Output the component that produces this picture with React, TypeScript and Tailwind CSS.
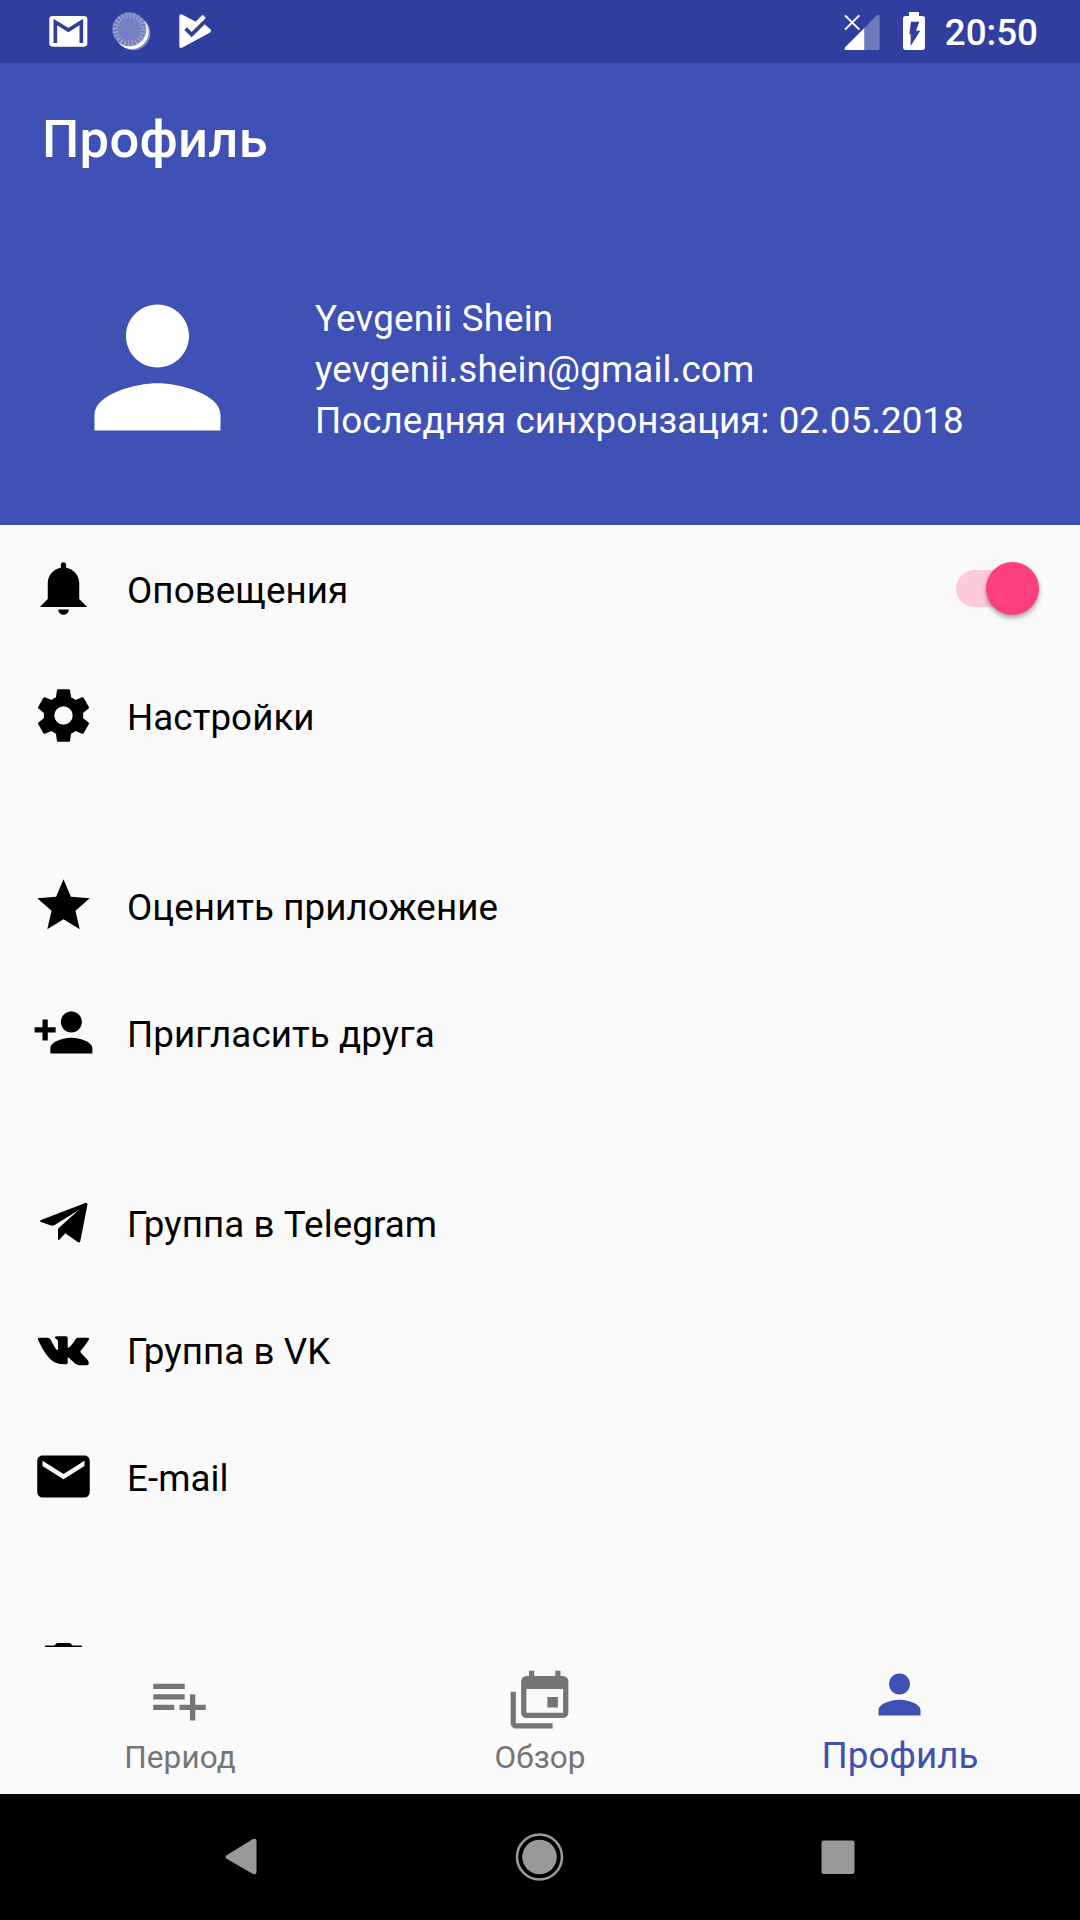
import type { ReactNode } from "react";
import { useState } from "react";

const paths = {
  bell: "M14,20A2,2 0 0,1 12,22A2,2 0 0,1 10,20H14M12,2A1,1 0 0,1 13,3V4.08C15.84,4.56 18,7.03 18,10V16L21,19H3L6,16V10C6,7.03 8.16,4.56 11,4.08V3A1,1 0 0,1 12,2Z",
  cog: "M12,15.5A3.5,3.5 0 0,1 8.5,12A3.5,3.5 0 0,1 12,8.5A3.5,3.5 0 0,1 15.5,12A3.5,3.5 0 0,1 12,15.5M19.43,12.97C19.47,12.65 19.5,12.33 19.5,12C19.5,11.67 19.47,11.34 19.43,11L21.54,9.37C21.73,9.22 21.78,8.95 21.66,8.73L19.66,5.27C19.54,5.05 19.27,4.96 19.05,5.05L16.56,6.05C16.04,5.66 15.5,5.32 14.87,5.07L14.5,2.42C14.46,2.18 14.25,2 14,2H10C9.75,2 9.54,2.18 9.5,2.42L9.13,5.07C8.5,5.32 7.96,5.66 7.44,6.05L4.95,5.05C4.73,4.96 4.46,5.05 4.34,5.27L2.34,8.73C2.21,8.95 2.27,9.22 2.46,9.37L4.57,11C4.53,11.34 4.5,11.67 4.5,12C4.5,12.33 4.53,12.65 4.57,12.97L2.46,14.63C2.27,14.78 2.21,15.05 2.34,15.27L4.34,18.73C4.46,18.95 4.73,19.03 4.95,18.95L7.44,17.94C7.96,18.34 8.5,18.68 9.13,18.93L9.5,21.58C9.54,21.82 9.75,22 10,22H14C14.25,22 14.46,21.82 14.5,21.58L14.87,18.93C15.5,18.67 16.04,18.34 16.56,17.94L19.05,18.95C19.27,19.03 19.54,18.95 19.66,18.73L21.66,15.27C21.78,15.05 21.73,14.78 21.54,14.63L19.43,12.97Z",
  star: "M12,17.27L18.18,21L16.54,13.97L22,9.24L14.81,8.62L12,2L9.19,8.62L2,9.24L7.45,13.97L5.82,21L12,17.27Z",
  personAdd: "M15 12c2.21 0 4-1.79 4-4s-1.79-4-4-4-4 1.79-4 4 1.79 4 4 4zm-9-2V7H4v3H1v2h3v3h2v-3h3v-2H6zm9 4c-2.67 0-8 1.34-8 4v2h16v-2c0-2.66-5.33-4-8-4z",
  email: "M20,8L12,13L4,8V6L12,11L20,6M20,4H4C2.89,4 2,4.89 2,6V18A2,2 0 0,0 4,20H20A2,2 0 0,0 22,18V6C22,4.89 21.1,4 20,4Z",
  trash: "M19,4H15.5L14.5,3H9.5L8.5,4H5V6H19V4M6,19A2,2 0 0,0 8,21H16A2,2 0 0,0 18,19V7H6V19Z",
  person: "M12 12c2.21 0 4-1.79 4-4s-1.79-4-4-4-4 1.79-4 4 1.79 4 4 4zm0 2c-2.67 0-8 1.34-8 4v2h16v-2c0-2.66-5.33-4-8-4z",
  playlist: "M14 10H2v2h12v-2zm0-4H2v2h12V6zm4 8v-4h-2v4h-4v2h4v4h2v-4h4v-2h-4zM2 16h8v-2H2v2z",
  calendars: "M21,17V8H7V17H21M21,3A2,2 0 0,1 23,5V17A2,2 0 0,1 21,19H7C5.89,19 5,18.1 5,17V5A2,2 0 0,1 7,3H8V1H10V3H18V1H20V3H21M3,21H17V23H3C1.89,23 1,22.1 1,21V9H3V21M19,15H15V11H19V15Z",
};

// drawn on a 189 grid
const telegram = "M160 36Q168 33 166 43L145 150Q144 157 137 153L100 127L82 146Q78 149 78 143V117Q78 113 81 110L140 57L68 102Q62 106 55 103L27 93Q21 90 27 87Z";
const vk = "M22 59H47Q53 59 56 65L66 84Q72 95 76 97Q78 97 78 93V70Q78 66 72 62L68 59Q69 55 76 55H102Q107 55 107 60V88Q109 91 113 87Q124 76 131 63Q134 59 140 59H167Q173 59 171 64Q166 75 146 98Q144 101 147 105L167 126Q173 134 170 139Q168 142 162 142H142Q134 141 128 136Q117 124 110 119Q107 118 107 121V134Q107 139 101 139Q80 140 66 132Q42 118 18 65Q16 59 22 59Z";

function Icon({ d, size = 24, className = "size-[63px]" }: { d: string; size?: number; className?: string }) {
  return (
    <svg viewBox={`0 0 ${size} ${size}`} className={`shrink-0 ${className}`} fill="currentColor">
      <path d={d} />
    </svg>
  );
}

function StatusBar() {
  return (
    <div className="flex h-[63px] shrink-0 items-center justify-between bg-[#303f9f] pr-[42px] pl-[46px]">
      <div className="flex items-center">
        {/* Gmail */}
        <svg viewBox="0 0 132 189" className="h-[63px] w-11" fill="none">
          <rect x="10" y="48" width="114" height="92" rx="10" fill="#fff" />
          <path d="M28 129V66L67 90L106 66V129" stroke="#303f9f" strokeWidth="11" />
        </svg>
        {/* Sync spinner */}
        <svg viewBox="0 0 189 189" className="ml-[10px] size-[63px]">
          <circle cx="100" cy="100" r="51" fill="#8088c5" />
          <circle cx="95" cy="96" r="51" fill="#fff" />
          <circle cx="88" cy="88" r="51" fill="#767fc1" />
          <circle cx="88" cy="88" r="42" fill="none" stroke="#aab0da" strokeWidth="16" strokeDasharray="3 7.995" />
        </svg>
        {/* Play check */}
        <svg viewBox="0 0 108 189" className="ml-[13px] h-[63px] w-9">
          <path d="M10 47Q11 40 20 44L59 65L80 44L89 53L79 67L103 88Q108 93 101 98L21 142Q11 147 10 139Z" fill="#fff" />
          <path d="M29 86L47 104L84 67" fill="none" stroke="#303f9f" strokeWidth="11" />
        </svg>
      </div>
      <div className="flex items-center">
        {/* Mobile signal, no service */}
        <svg viewBox="0 0 120 189" className="h-[63px] w-10">
          <path d="M67 84L103 47Q113 40 113 50V145Q113 150 108 150H67Z" fill="#7079bc" />
          <path d="M10 141L67 84V150H12Q4 149 10 141Z" fill="#fff" />
          <path d="M9 46L52 89M52 46L9 89" stroke="#fff" strokeWidth="6" />
        </svg>
        {/* Battery charging */}
        <svg viewBox="0 0 90 189" className="ml-[17px] h-[63px] w-[30px]">
          <path d="M30 36H60V48H70Q78 48 78 56V142Q78 150 70 150H20Q12 150 12 142V56Q12 48 20 48H30Z" fill="#fff" />
          <path d="M36 65H61L51 92H64L35 138V102H31Z" fill="#303f9f" />
        </svg>
        <span className="ml-[16px] pt-[4px] text-[36.75px] leading-none font-medium">20:50</span>
      </div>
    </div>
  );
}

function Header() {
  return (
    <header className="h-[462px] shrink-0 bg-[#3f51b5]">
      <h1 className="flex h-[147px] items-center px-[42px] pt-[5px] text-[52.5px] font-medium tracking-[0.3px]">Профиль</h1>
      <div className="flex items-center py-[63px] pl-[63px]">
        <Icon d={paths.person} className="size-[189px]" />
        <div className="ml-[63px] pt-[3px] text-[36.75px] leading-[51px] whitespace-nowrap">
          <p className="tracking-[0.17px]">Yevgenii Shein</p>
          <p className="tracking-[0.15px]">yevgenii.shein@gmail.com</p>
          <p className="tracking-[0.05px]">Последняя синхронзация: 02.05.2018</p>
        </div>
      </div>
    </header>
  );
}

function Row({ icon, label, children }: { icon: ReactNode; label?: string; children?: ReactNode }) {
  return (
    <li className="flex h-[127px] items-center pr-[41px] pl-8">
      {icon}
      {label && <span className="ml-[32px] pt-[5px] text-[36.75px] leading-[44px] tracking-[0.07px]">{label}</span>}
      {children}
    </li>
  );
}

function Toggle() {
  const [on, setOn] = useState(true);
  return (
    <button
      onClick={() => setOn(!on)}
      className={`ml-auto flex h-[37px] w-[83px] items-center rounded-full ${on ? "justify-end bg-[#fbcadb]" : "justify-start bg-gray-300"}`}
    >
      <span
        className={`size-[53px] shrink-0 rounded-full shadow-[0_3px_5px_rgba(0,0,0,0.35)] ${on ? "bg-[#fc407f]" : "bg-gray-50"}`}
      />
    </button>
  );
}

const tabs = [
  { label: "Период", icon: paths.playlist },
  { label: "Обзор", icon: paths.calendars },
  { label: "Профиль", icon: paths.person },
];

function BottomNav() {
  const [active, setActive] = useState(2);
  return (
    <nav className="flex h-[147px] shrink-0 bg-[#fafafa]">
      {tabs.map((tab, i) => (
        <button
          key={tab.label}
          onClick={() => setActive(i)}
          className={`flex flex-1 flex-col items-center ${active === i ? "pt-[16px] text-[#3f51b5]" : "pt-[21px] text-[#757575]"}`}
        >
          <Icon d={tab.icon} className="mr-[2px] size-[63px]" />
          <span className={active === i ? "mt-[8px] text-[36.75px] leading-[43px]" : "mt-[8px] text-[31.5px] leading-[37px] tracking-[0.1px]"}>
            {tab.label}
          </span>
        </button>
      ))}
    </nav>
  );
}

function SystemNav() {
  return (
    <div className="flex h-[126px] shrink-0 items-center justify-between bg-black px-[210px] text-[#999]">
      <svg viewBox="0 0 63 63" className="size-[63px]" fill="currentColor">
        <path d="M17 29L43 13Q46.5 12 46.5 15V46Q46.5 49 43 48L17 33Q14 31 17 29Z" />
      </svg>
      <svg viewBox="0 0 63 63" className="size-[63px]" fill="currentColor">
        <circle cx="30.5" cy="31" r="17.3" />
        <circle cx="30.5" cy="31" r="22.5" fill="none" stroke="currentColor" strokeWidth="2.6" />
      </svg>
      <svg viewBox="0 0 63 63" className="size-[63px]" fill="currentColor">
        <rect x="14.5" y="14.5" width="33" height="33.5" rx="2" />
      </svg>
    </div>
  );
}

export default function App() {
  return (
    <div className="flex h-[1920px] w-[1080px] flex-col overflow-hidden bg-[#fafafa] font-[Roboto,sans-serif] text-white">
      <StatusBar />
      <Header />
      <main className="flex min-h-0 flex-1 flex-col gap-[63px] overflow-hidden text-black">
        <ul>
          <Row icon={<Icon d={paths.bell} />} label="Оповещения">
            <Toggle />
          </Row>
          <Row icon={<Icon d={paths.cog} />} label="Настройки" />
        </ul>
        <ul>
          <Row icon={<Icon d={paths.star} />} label="Оценить приложение" />
          <Row icon={<Icon d={paths.personAdd} />} label="Пригласить друга" />
        </ul>
        <ul>
          <Row icon={<Icon d={telegram} size={189} />} label="Группа в Telegram" />
          <Row icon={<Icon d={vk} size={189} />} label="Группа в VK" />
          <Row icon={<Icon d={paths.email} />} label="E-mail" />
        </ul>
        <ul>
          <Row icon={<Icon d={paths.trash} />} />
        </ul>
      </main>
      <BottomNav />
      <SystemNav />
    </div>
  );
}
